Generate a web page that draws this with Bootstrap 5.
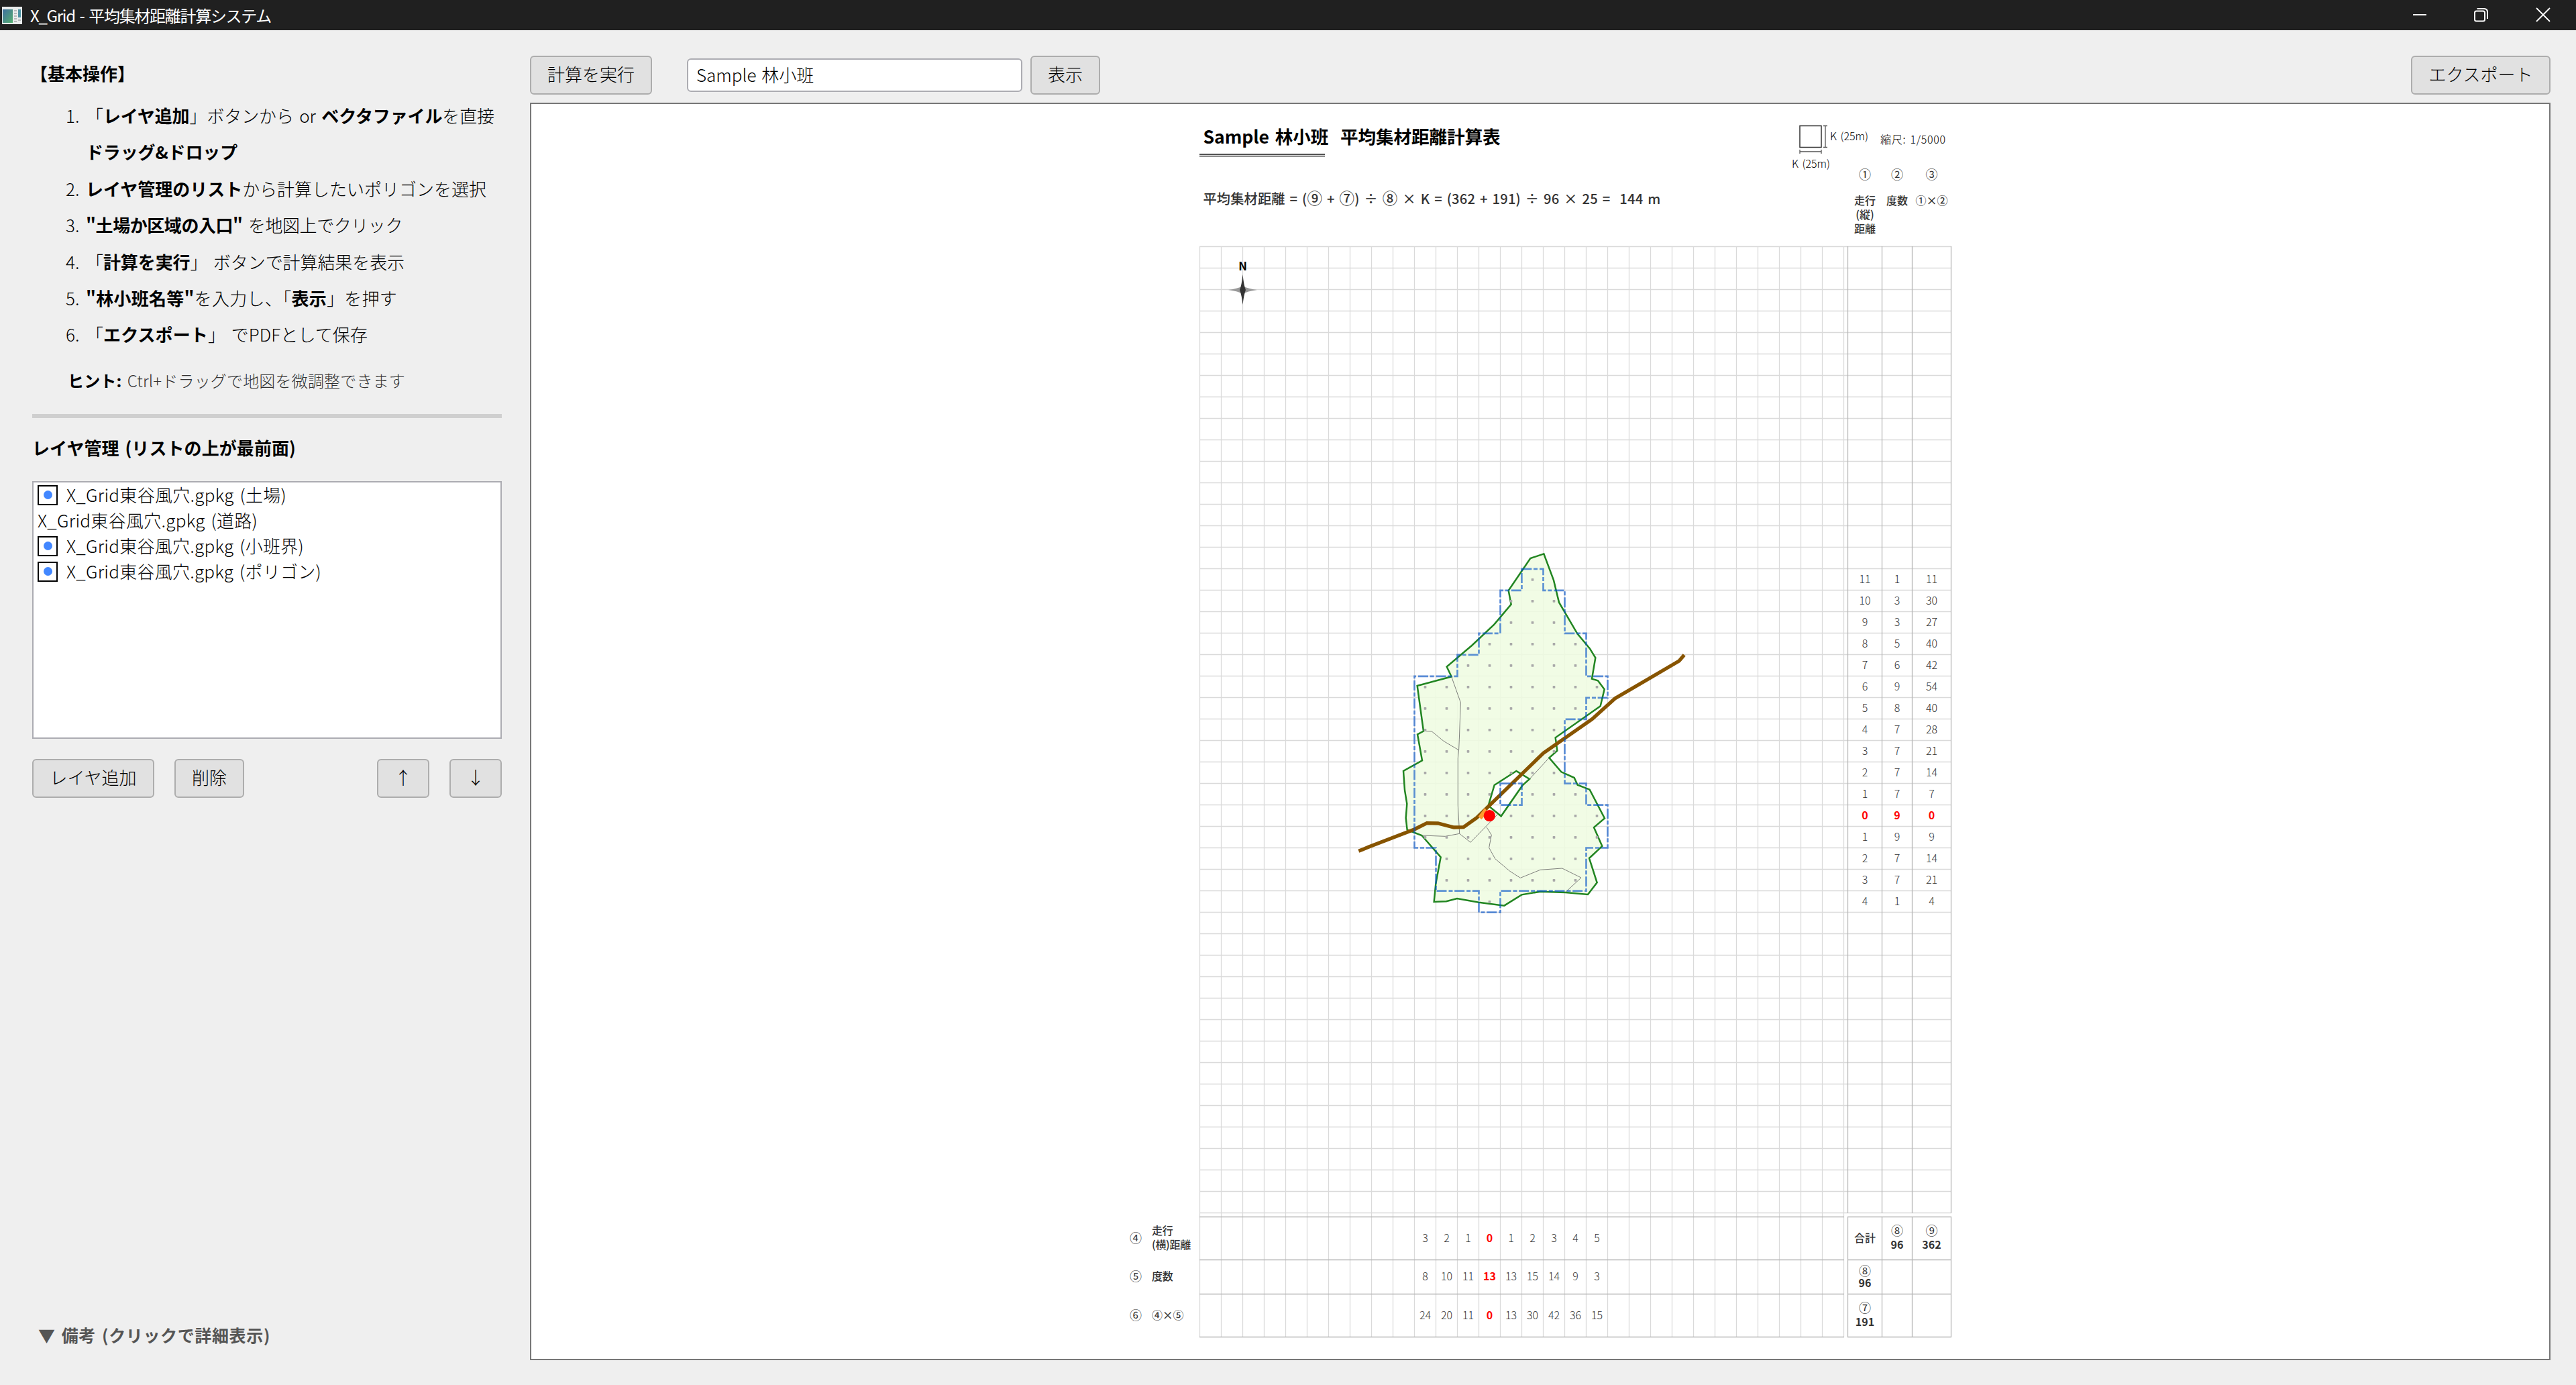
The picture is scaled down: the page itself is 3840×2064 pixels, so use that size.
<!DOCTYPE html>
<html lang="ja">
<head>
<meta charset="utf-8">
<title>X_Grid - 平均集材距離計算システム</title>
<meta name="viewport" content="width=device-width, initial-scale=1">
<link href="https://cdn.jsdelivr.net/npm/bootstrap@5.3.0/dist/css/bootstrap.min.css" rel="stylesheet">
<style>
  html, body { height: 100%; }
  body { font-family: "Noto Sans CJK JP", "Noto Sans", sans-serif; font-size: 26px; line-height: 38px; color: #000; background: #efefef; font-weight: 300; overflow: hidden; }
  b { font-weight: 700; }
  span, b { white-space: pre; }
  [data-fit] { word-spacing: .11em; }
  .titlebar { height: 45px; background: #202020; color: #fff; font-size: 24px; font-weight: 400; padding: 0 38px 0 3px; }
  .titlebar .app-name { margin-left: 12px; }
  .side { width: 790px; padding: 42px 42px 0 48px; }
  .heading-a { line-height: 44px; }
  .heading-a b { margin-left: -3px; }
  .steps { padding-left: 50px; margin-top: 14px; line-height: 54.4px; }
  .steps li { display: flex; }
  .steps .num { width: 30px; flex: none; }
  .hint { font-size: 24px; padding-left: 53px; line-height: 40px; color: #333; margin-top: 21px; }
  .hint b { color: #000; }
  .rule { height: 6px; background: #cfcfcf; margin-top: 30px; }
  .heading-b { margin-top: 25px; }
  .layers { height: 384px; border: 2px solid #acacb2; background: #fff; margin-top: 31px; }
  .layers li { height: 38px; padding-left: 6px; }
  .layers [data-fit] { margin-top: -2px; }
  .tick { width: 30px; height: 30px; border: 2px solid #000; margin-right: 13px; flex: none; }
  .tick i { width: 13px; height: 13px; border-radius: 50%; background: #4287ff; }
  .layer-actions { margin-top: 30px; }
  .btn-win { --bs-btn-font-size: 26px; --bs-btn-font-weight: 300; --bs-btn-bg: #e1e1e1; --bs-btn-border-color: #adadad; --bs-btn-border-width: 2px; --bs-btn-border-radius: 6px; --bs-btn-color: #000; --bs-btn-padding-x: 0; --bs-btn-padding-y: 0; height: 58px; line-height: 50px; padding-bottom: 4px; }
  .w-add { width: 182px; } .w-del { width: 104px; margin-left: 30px; } .w-arr { width: 78px; } .w-run { width: 182px; } .w-show { width: 104px; margin-left: 12px; } .w-exp { width: 208px; }
  .w-down { margin-left: 30px; }
  .notes { font-size: 25px; font-weight: 700; color: #555; padding-left: 9px; margin-bottom: 56px; }
  .main-area { padding: 38px 38px 0 0; }
  .name-box { width: 500px; height: 50px; border: 2px solid #acacb2; border-radius: 6px; font-size: 26px; font-weight: 300; padding: 0 12px 3px; margin-left: 52px; color: #000; background: #fff; word-spacing: 2px; }
  .viewport-frame { border: 2px solid #777; background: #fff; height: 1874px; margin-top: 12px; padding: 0 0 0 888px; }
  .sheet { display: grid; width: 1230px; grid-template-columns: 108.5px 960px 6px 51px 45px 58px; grid-template-rows: 213px 1440px 6px 64px 51px 64px; font-size: 16px; line-height: 21px; color: #333; }
  .sheet-bg { grid-row: 1 / 7; grid-column: 1 / 7; width: 1240px; height: 1860px; }
  .sheet-head { grid-row: 1; grid-column: 2 / 7; padding-left: 5px; }
  .sheet-title { font-size: 26.6px; font-weight: 700; color: #000; line-height: 40px; padding-top: 28px; }
  .sheet-formula { font-size: 20.2px; font-weight: 500; line-height: 30px; margin-top: 58px; }
  .sheet-formula i { font-style: normal; font-size: 22.5px; line-height: 1; }
  .colhead { grid-row: 1; padding-top: 94px; text-align: center; font-weight: 500; }
  .rule-no { font-size: 18px; font-weight: 400; }
  .colhead .rule-no { margin-bottom: 18px; }
  .numcol { grid-row: 2; padding-top: 480px; text-align: center; }
  .numcol div { height: 32px; line-height: 29px; }
  .numrow { grid-column: 2; display: flex; padding: 0 0 4px 320px; align-items: center; }
  .numrow div { width: 32px; text-align: center; }
  .hot { color: #f00; font-weight: 700; }
  .rowlab { grid-column: 1; display: flex; align-items: center; padding: 0 0 4px 4px; font-weight: 500; letter-spacing: -.3px; }
  .rowlab .rule-no { width: 33px; font-weight: 400; }
  .sumcell { display: flex; flex-direction: column; justify-content: center; align-items: center; font-weight: 500; padding-bottom: 4px; }
  .sumcell b { font-weight: 700; }
  .tight { line-height: 18px; }
  .tight .rule-no { line-height: 18px; }
  svg text { font-family: "Noto Sans CJK JP", "Noto Sans", sans-serif; word-spacing: 2px; }
</style>
<script src="https://cdn.jsdelivr.net/npm/bootstrap@5.3.0/dist/js/bootstrap.bundle.min.js"></script>
</head>
<body class="d-flex flex-column">
<header class="titlebar d-flex align-items-center flex-shrink-0">
  <svg width="30" height="26" viewBox="0 0 30 26"><defs><linearGradient id="g" x1="0" y1="0" x2="1" y2="1"><stop offset="0" stop-color="#3f6fa0"/><stop offset="1" stop-color="#56b070"/></linearGradient></defs><rect width="30" height="26" fill="#e9ecec"/><rect x="1" y="4" width="15" height="20" fill="url(#g)"/><rect x="24" y="4" width="4" height="12" fill="#4b93a3"/><path d="M18 6h4M18 10h4M18 14h4M18 18h4M18 22h4M24 20h4" stroke="#b5b9bb" stroke-width="2"/></svg>
  <span class="app-name" data-fit="359">X_Grid - 平均集材距離計算システム</span>
  <svg class="ms-auto" width="206" height="24" viewBox="0 0 206 24" fill="none" stroke="#fff" stroke-width="2"><path d="M1 11H21"/><rect x="93" y="5.500" width="15" height="15" rx="2.500"/><path d="M96.500 2H107Q112 2 112 7V17"/><path d="M185 1L205 21M205 1L185 21" stroke-width="1.800"/></svg>
</header>
<div class="d-flex flex-grow-1">
  <aside class="side d-flex flex-column flex-shrink-0">
    <div class="heading-a"><b>【基本操作】</b></div>
    <ol class="steps list-unstyled mb-0">
      <li><span class="num">1.</span><div><span data-fit="609">「<b>レイヤ追加</b>」ボタンから or <b>ベクタファイル</b>を直接</span><br><b data-fit="226">ドラッグ&amp;ドロップ</b></div></li>
      <li><span class="num">2.</span><span data-fit="597"><b>レイヤ管理のリスト</b>から計算したいポリゴンを選択</span></li>
      <li><span class="num">3.</span><span data-fit="472"><b>"土場か区域の入口"</b> を地図上でクリック</span></li>
      <li><span class="num">4.</span><span data-fit="475">「<b>計算を実行</b>」 ボタンで計算結果を表示</span></li>
      <li><span class="num">5.</span><span data-fit="464"><b>"林小班名等"</b>を入力し、「<b>表示</b>」を押す</span></li>
      <li><span class="num">6.</span><span data-fit="420">「<b>エクスポート</b>」 でPDFとして保存</span></li>
    </ol>
    <div class="hint"><span data-fit="503"><b>ヒント:</b> Ctrl+ドラッグで地図を微調整できます</span></div>
    <div class="rule"></div>
    <div class="heading-b"><b data-fit="393">レイヤ管理 (リストの上が最前面)</b></div>
    <ul class="layers list-unstyled mb-0">
      <li class="d-flex align-items-center"><span class="tick d-flex align-items-center justify-content-center"><i></i></span><span data-fit="328">X_Grid東谷風穴.gpkg (土場)</span></li>
      <li class="d-flex align-items-center"><span data-fit="328">X_Grid東谷風穴.gpkg (道路)</span></li>
      <li class="d-flex align-items-center"><span class="tick d-flex align-items-center justify-content-center"><i></i></span><span data-fit="354">X_Grid東谷風穴.gpkg (小班界)</span></li>
      <li class="d-flex align-items-center"><span class="tick d-flex align-items-center justify-content-center"><i></i></span><span data-fit="380">X_Grid東谷風穴.gpkg (ポリゴン)</span></li>
    </ul>
    <div class="layer-actions d-flex">
      <button class="btn btn-win w-add">レイヤ追加</button>
      <button class="btn btn-win w-del">削除</button>
      <button class="btn btn-win w-arr ms-auto">↑</button>
      <button class="btn btn-win w-arr w-down">↓</button>
    </div>
    <div class="notes mt-auto"><span data-fit="346">▼ 備考 (クリックで詳細表示)</span></div>
  </aside>
  <main class="main-area flex-grow-1">
    <div class="d-flex align-items-center">
      <button class="btn btn-win w-run">計算を実行</button>
      <input class="name-box" value="Sample 林小班" aria-label="林小班名">
      <button class="btn btn-win w-show">表示</button>
      <button class="btn btn-win w-exp ms-auto">エクスポート</button>
    </div>
    <div class="viewport-frame">
      <div class="sheet">
        <svg class="sheet-bg" viewBox="1680 155 1240 1860" fill="none">
          <g id="lines"></g>
          <path d="M1788 230H1975" stroke="#555" stroke-width="2"/><path d="M1788 232.500H1975" stroke="#000"/><path d="M1788 233.500H1975" stroke="#bbb"/>
          <rect x="2683" y="187.500" width="32" height="32" stroke="#333" stroke-width="1.500"/>
          <path d="M2721 187.500V219.500M2718 187.500H2724M2718 219.500H2724M2683 226H2715M2683 223V229M2715 223V229" stroke="#555" stroke-width="1.300"/>
          <g font-size="16" font-weight="300" fill="#000"><text x="2728" y="209" textLength="57">K (25m)</text><text x="2671" y="250" textLength="57">K (25m)</text><text x="2803" y="214" textLength="97">縮尺: 1/5000</text></g>
          <text x="1852.500" y="403" font-size="17" font-weight="700" fill="#000" text-anchor="middle">N</text>
          <path d="M1831 432Q1846 430 1852.500 426Q1859 430 1874 432Q1859 434 1852.500 438Q1846 434 1831 432Z" fill="#999"/>
          <path d="M1852.500 409Q1854 425 1857 432Q1854 440 1852.500 454Q1851 440 1848 432Q1851 425 1852.500 409Z" fill="#333"/>
          <g transform="translate(2040 800) scale(.33333)">
            <path d="M784 76 724 96 626 240 638 302 562 392 462 486 350 581 371 625 218 666 246 869 219 883 240 1000 156 1047 162 1132 172 1194 167 1257 173 1310 238 1335 323 1432 301 1550 293 1632 348 1630 396 1617 493 1634 607 1649 685 1600 769 1586 881 1590 981 1599 1022 1546 987 1437 1045 1383 1008 1299 1056 1258 989 1130 935 1109 920 1077 862 1051 808 988 844 956 836 898 1037 757 1055 682 1026 643 999 635 1015 541 990 500 934 433 852 293 828 194ZM661 1047 563 1110 536 1202 593 1249 688 1112 720 1083Z" fill="#eefce0" fill-opacity=".85" fill-rule="evenodd" stroke="#218521" stroke-width="7.500"/>
            <path d="M371 625 412 741 406 905 404 950 400 990V1200L407 1327 456 1366 578 1240M720 1083 808 988M246 868 283 870 337 914 403 953M238 1335 343 1339 407 1327M528 1298 550 1333 539 1390 566 1439 631 1494 679 1525 768 1489 866 1482 951 1524 881 1589" stroke="#666" stroke-width="2.500"/>
            <g id="dots" fill="#a9a9a9"></g>
            <path d="M-44 1405 0 1387 205 1308 261 1280 311 1281 382 1299 425 1298 484 1256 782 967 1000 815 1102 723 1389 555 1412 528" stroke="#875400" stroke-width="16"/>
            <path d="M520 1212 534 1232 520 1248 505 1264 491 1250Z" fill="#ff9a2e"/>
            <path d="M685 143.500H781.500V239.500H877.500V431.500H973.500V623.500H1069.500V719.500H973.500V815.500H877.500V1103H973.500V1199H1069.500V1390.500H973.500V1583H589.500V1679H493.500V1583H301.500V1390.500H205.500V623.500H397.500V527.500H493.500V431.500H589.500V239.500H685.500ZM589.500 1103H685.500V1199H589.500Z" stroke="#0050c8" stroke-opacity=".62" stroke-width="8" stroke-dasharray="45 8 18 9"/>
            <circle cx="541" cy="1247" r="26" fill="#f00"/>
          </g>
        </svg>
        <div class="sheet-head">
          <div class="sheet-title"><span data-fit="443">Sample 林小班  平均集材距離計算表</span></div>
          <div class="sheet-formula"><span data-fit="682">平均集材距離 = (<i>⑨</i> + <i>⑦</i>) ÷ <i>⑧</i> × K = (362 + 191) ÷ 96 × 25 =  144 m</span></div>
        </div>
        <div class="colhead" style="grid-column:4"><div class="rule-no">①</div>走行<br>(縦)<br>距離</div>
        <div class="colhead" style="grid-column:5"><div class="rule-no">②</div>度数</div>
        <div class="colhead" style="grid-column:6"><div class="rule-no">③</div>①×②</div>
        <div class="numcol" style="grid-column:4" data-col="11 10 9 8 7 6 5 4 3 2 1 0 1 2 3 4"></div>
        <div class="numcol" style="grid-column:5" data-col="1 3 3 5 6 9 8 7 7 7 7 9 9 7 7 1"></div>
        <div class="numcol" style="grid-column:6" data-col="11 30 27 40 42 54 40 28 21 14 7 0 9 14 21 4"></div>
        <div class="rowlab" style="grid-row:4"><span class="rule-no">④</span><span>走行
(横)距離</span></div>
        <div class="rowlab" style="grid-row:5"><span class="rule-no">⑤</span><span>度数</span></div>
        <div class="rowlab" style="grid-row:6"><span class="rule-no">⑥</span><span>④×⑤</span></div>
        <div class="numrow" style="grid-row:4" data-row="3 2 1 0 1 2 3 4 5"></div>
        <div class="numrow" style="grid-row:5" data-row="8 10 11 13 13 15 14 9 3"></div>
        <div class="numrow" style="grid-row:6" data-row="24 20 11 0 13 30 42 36 15"></div>
        <div class="sumcell" style="grid-row:4;grid-column:4">合計</div>
        <div class="sumcell" style="grid-row:4;grid-column:5"><span class="rule-no">⑧</span><b>96</b></div>
        <div class="sumcell" style="grid-row:4;grid-column:6"><span class="rule-no">⑨</span><b>362</b></div>
        <div class="sumcell tight" style="grid-row:5;grid-column:4"><span class="rule-no">⑧</span><b>96</b></div>
        <div class="sumcell" style="grid-row:6;grid-column:4"><span class="rule-no">⑦</span><b>191</b></div>
      </div>
    </div>
  </main>
</div>
<script>
  // Grid: 30 x 45 cells of 32px, tally columns on the right, tally rows below
  let light = '', dark = '';
  for (let k = 0; k <= 30; k++) light += `M${1788.5 + 32 * k} 367.500V1993`;
  for (let k = 0; k <= 45; k++) light += `M1788 ${367.5 + 32 * k}H2909`;
  for (const x of [2754.5, 2805.5, 2850.5, 2908.5]) dark += `M${x} 367V1808M${x} 1813V1993`;
  for (const y of [1813.5, 1877.5, 1928.5, 1992.5]) dark += `M1788 ${y}H2749M2754 ${y}H2909`;
  document.getElementById('lines').innerHTML =
    `<path d="${light}" stroke="#dadada" stroke-width="1.300"/><path d="${dark}" stroke="#b8b8b8" stroke-width="1.300"/>`;

  // Cell centres inside the polygon, as [first, last] column per row
  const spans = [[5,5],[4,6],[4,6],[3,7],[2,7],[0,8],[0,7],[0,6],[0,6],[0,6],[0,7],[0,8],[0,8],[1,7],[1,7],[3,3]];
  let dots = '';
  spans.forEach(([a, b], j) => {
    for (let i = a; i <= b; i++) if (!(j === 10 && i === 4))
      dots += `<rect x="${248 + 96 * i}" y="${186 + 96 * j}" width="11" height="11" rx="2"/>`;
  });
  document.getElementById('dots').innerHTML = dots;

  document.querySelectorAll('[data-col]').forEach(el => {
    el.innerHTML = el.dataset.col.split(' ').map((n, i) => `<div${i === 11 ? ' class="hot"' : ''}>${n}</div>`).join('');
  });
  document.querySelectorAll('[data-row]').forEach(el => {
    el.innerHTML = el.dataset.row.split(' ').map((n, i) => `<div${i === 3 ? ' class="hot"' : ''}>${n}</div>`).join('');
  });

  // Track each label out (or in) to its set width
  document.querySelectorAll('[data-fit]').forEach(el => {
    const w = el.getBoundingClientRect().width;
    el.style.letterSpacing = (el.dataset.fit - w) / el.textContent.length + 'px';
  });
</script>
</body>
</html>
